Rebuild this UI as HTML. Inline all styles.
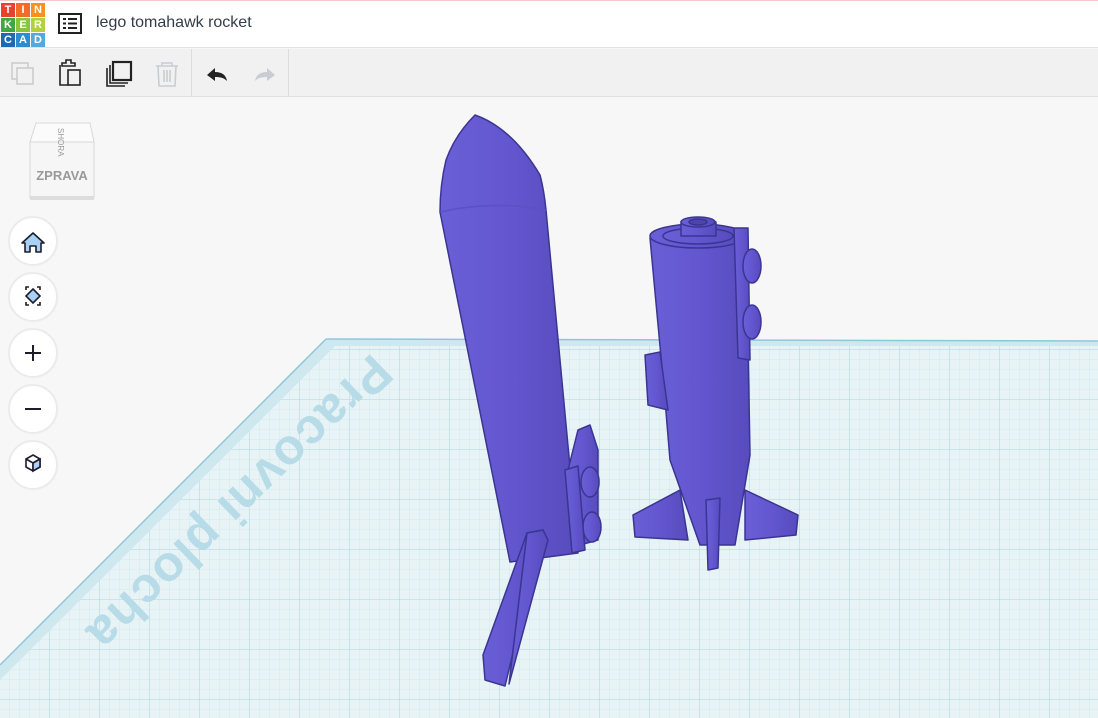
<!DOCTYPE html>
<html><head><meta charset="utf-8"><style>
*{margin:0;padding:0;box-sizing:border-box}
body{width:1098px;height:718px;overflow:hidden;background:#f7f7f7;font-family:"Liberation Sans",sans-serif;position:relative}
#top{position:absolute;left:0;top:0;width:1098px;height:48px;background:#fff;border-top:1px solid #f3c8c8;border-bottom:1px solid #e2e2e2}
.logo{position:absolute;left:1px;top:2px;display:grid;grid-template-columns:repeat(3,14px);grid-gap:1px}
.logo div{width:14px;height:14px;color:#fff;font-weight:bold;font-size:11px;text-align:center;line-height:14px}
#title{position:absolute;left:96px;top:13px;font-size:16px;color:#333c48}
#tb{position:absolute;left:0;top:49px;width:1098px;height:48px;background:#f1f1f1;border-bottom:1px solid #e0e0e0}
.sep{position:absolute;top:0;width:1px;height:48px;background:#dcdcdc}
.btn{position:absolute;left:8px;width:50px;height:50px;border-radius:50%;background:#fff;border:2px solid #ebebeb}
</style></head><body>
<svg width="1098" height="718" style="position:absolute;left:0;top:0">
<defs>
<pattern id="g1" width="10" height="10" patternUnits="userSpaceOnUse"><path d="M10 0V10M0 10H10" stroke="#c3e2ea" stroke-width="0.6" fill="none"/></pattern>
<pattern id="g2" width="50" height="50" patternUnits="userSpaceOnUse"><path d="M50 0V50M0 50H50" stroke="#9ccfdd" stroke-width="0.8" fill="none"/></pattern>
<linearGradient id="rk" x1="0" x2="1" y1="0" y2="0"><stop offset="0" stop-color="#6b5fd8"/><stop offset="0.5" stop-color="#6356cf"/><stop offset="1" stop-color="#574bbd"/></linearGradient>
</defs>
<polygon points="326,339 1098,341 1098,718 0,718 0,665" fill="#e8f3f6"/>
<polygon points="326,339 1098,341 1098,718 0,718 0,665" fill="url(#g1)"/>
<polygon points="326,339 1098,341 1098,718 0,718 0,665" fill="url(#g2)"/>
<polygon points="326,339 1098,341 1098,346 335,346 0,680 0,665" fill="#cfe8f0"/>
<line x1="326" y1="339" x2="1098" y2="341" stroke="#8cc8dc" stroke-width="1.5"/>
<line x1="326" y1="339" x2="0" y2="665" stroke="#8cc8dc" stroke-width="1.5"/>
<text x="0" y="0" transform="translate(372,352) rotate(136)" font-family="Liberation Sans" font-weight="bold" font-size="50" fill="#b7dce7" letter-spacing="1">Pracovni plocha</text>
<g fill="url(#rk)" stroke="#3b3591" stroke-width="1.5" stroke-linejoin="round">
<path d="M475,115 Q455,135 446,160 Q440,185 440,212 L510,562 L578,553 L546,210 Q544,190 540,175 Q512,128 475,115 Z"/>
<path d="M440,212 Q493,200 546,210" fill="none" stroke="#5c50c4"/>
<polygon points="578,430 590,425 598,450 598,540 580,545 568,470"/>
<ellipse cx="590" cy="482" rx="9" ry="15"/>
<ellipse cx="592" cy="527" rx="9" ry="15"/>
<polygon points="565,470 578,466 585,550 572,553"/>
<polygon points="527,533 543,530 505,686 485,680 483,655"/>
<polygon points="527,533 543,530 548,540 509,684"/>
<polygon points="633,515 680,490 688,540 635,537"/>
<polygon points="745,490 798,515 796,535 745,540"/>
<path d="M650,238 L665,400 L670,460 L700,545 L735,545 L750,455 L746,232 Z"/>
<ellipse cx="698" cy="236" rx="48" ry="12"/>
<ellipse cx="698" cy="236" rx="35" ry="8"/>
<rect x="681" y="222" width="35" height="14"/>
<ellipse cx="698" cy="222" rx="17" ry="5"/>
<ellipse cx="698" cy="222" rx="9" ry="3" fill="#4e44b0"/>
<polygon points="734,228 748,228 750,360 738,358"/>
<ellipse cx="752" cy="266" rx="9" ry="17"/>
<ellipse cx="752" cy="322" rx="9" ry="17"/>
<polygon points="645,355 660,352 668,410 648,405"/>
<polygon points="706,500 720,498 718,568 708,570"/>
</g>
</svg>
<div id="top">
<div class="logo">
<div style="background:#e8412e">T</div><div style="background:#f26b2a">I</div><div style="background:#f7911e">N</div>
<div style="background:#40a842">K</div><div style="background:#8bc43f">E</div><div style="background:#b3d13b">R</div>
<div style="background:#1b6ab5">C</div><div style="background:#2d8bd0">A</div><div style="background:#54a9df">D</div>
</div>
<svg style="position:absolute;left:58px;top:12px" width="24" height="22"><rect x="1" y="1" width="22" height="19" fill="none" stroke="#222" stroke-width="2"/><rect x="5" y="5" width="3" height="2" fill="#222"/><rect x="10" y="5" width="9" height="2" fill="#222"/><rect x="5" y="9.5" width="3" height="2" fill="#222"/><rect x="10" y="9.5" width="9" height="2" fill="#222"/><rect x="5" y="14" width="3" height="2" fill="#222"/><rect x="10" y="14" width="9" height="2" fill="#222"/></svg>
<div id="title">lego tomahawk rocket</div>
</div>
<div id="tb">
<svg width="300" height="48" style="position:absolute;left:0;top:0" fill="none" stroke-width="1.6">
<rect x="12" y="14" width="16" height="16" stroke="#ccc"/><rect x="17" y="19" width="16" height="16" stroke="#ccc" fill="#f1f1f1"/>
<path d="M62 14h4v-3h5v3h4v3h-13z M60 16v20h8" stroke="#222"/><rect x="68" y="21" width="12" height="15" stroke="#222"/>
<rect x="113" y="13" width="18" height="18" stroke="#222" stroke-width="2.2"/><path d="M110 16v18h18 M107 19v18h18" stroke="#222"/>
<path d="M156 17h22 M162 17v-3h10v3 M158 17l1 20h16l1-20 M164 21v12 M167 21v12 M170 21v12" stroke="#c9ccd3"/>
<path d="M207 26l8-7v4c7 0 11 3 12 9c-3-3-6-4-12-4v4z" fill="#222" stroke="none"/>
<path d="M275 26l-8-7v4c-7 0-11 3-12 9c3-3 6-4 12-4v4z" fill="#c9ccd3" stroke="none"/>
</svg>
<div class="sep" style="left:191px"></div><div class="sep" style="left:288px"></div>
</div>
<svg style="position:absolute;left:26px;top:120px" width="72" height="82">
<polygon points="10,3 64,3 68,22 4,22" fill="#fbfbfb" stroke="#d8d8d8"/>
<rect x="4" y="22" width="64" height="56" fill="#f6f6f6" stroke="#d8d8d8"/>
<rect x="4" y="76" width="64" height="4" fill="#ddd"/>
<text x="0" y="0" transform="translate(32,8) rotate(90)" font-size="8" fill="#999" font-family="Liberation Sans">SHORA</text>
<text x="36" y="60" font-size="13" font-weight="bold" fill="#999" text-anchor="middle" font-family="Liberation Sans">ZPRAVA</text>
</svg>
<div class="btn" style="top:216px"></div><div class="btn" style="top:272px"></div><div class="btn" style="top:328px"></div><div class="btn" style="top:384px"></div><div class="btn" style="top:440px"></div>
<svg width="70" height="500" style="position:absolute;left:0;top:0" stroke="#1d1d2b" stroke-width="1.6" fill="none">
<path d="M22 243l11-10 11 10h-3v9h-5v-6h-6v6h-5v-9z" fill="#a9d1f5" stroke-linejoin="round"/>
<path d="M26 290v-3h3 M37 287h3v3 M40 302v3h-3 M29 305h-3v-3" />
<path d="M33 289l7 7-7 7-7-7z" fill="#a9d1f5"/>
<path d="M25 353h16 M33 345v16" stroke-width="2"/>
<path d="M25 409h16" stroke-width="2"/>
<path d="M33 455l7 4v8l-7 4-7-4v-8z M26 459l7 4 7-4 M33 463v8" fill="#fff"/><path d="M33 463l7-4v8l-7 4z" fill="#a9d1f5"/>
</svg>
</body></html>
